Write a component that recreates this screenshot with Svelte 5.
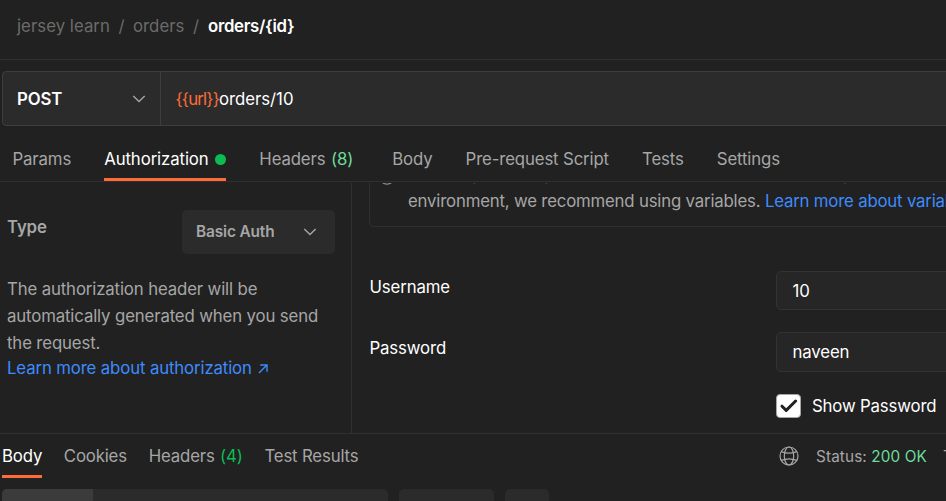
<script>
  const requestTabs = [
    { label: 'Params' },
    { label: 'Authorization', active: true, dot: true },
    { label: 'Headers', count: 8 },
    { label: 'Body' },
    { label: 'Pre-request Script' },
    { label: 'Tests' },
    { label: 'Settings' }
  ];
  const responseTabs = [
    { label: 'Body', active: true },
    { label: 'Cookies' },
    { label: 'Headers', count: 4 },
    { label: 'Test Results' }
  ];
</script>

{#snippet chevron()}
  <svg class="chevron" width="14" height="8" viewBox="0 0 14 8"><path d="M1.3 1.1 7 6.6l5.7-5.5" /></svg>
{/snippet}

<main>
  <nav class="crumbs">
    <span>jersey learn</span><i>/</i><span>orders</span><i>/</i><b>orders/{'{id}'}</b>
  </nav>

  <div class="urlbar">
    <div class="method"><b>POST</b>{@render chevron()}</div>
    <div class="url"><span class="var">{'{{url}}'}</span><span>orders/10</span></div>
  </div>

  <nav class="tabs">
    {#each requestTabs as t}
      <div class="tab" class:active={t.active} class:counted={t.count}>
        {t.label}{#if t.dot}<span class="dot"></span>{/if}{#if t.count}<span class="count">({t.count})</span>{/if}
      </div>
    {/each}
  </nav>

  <section class="auth">
    <aside>
      <div class="type">
        <b>Type</b>
        <div class="select"><b>Basic Auth</b>{@render chevron()}</div>
      </div>
      <p>The authorization header will be<br />automatically generated when you send<br />the request.</p>
      <a class="learn">Learn more about authorization
        <svg width="10" height="10" viewBox="0 0 10 10"><path d="M1 9 8.7 1.3M2.2 1h6.8v6.8" /></svg></a>
    </aside>
    <div class="fields">
      <div class="notice">
        <svg class="info" width="18" height="18" viewBox="0 0 18 18"><circle cx="9" cy="9" r="8.2" /><path d="M9 8v5M9 5v1.2" /></svg>
        <div>Heads up! These parameters hold sensitive data. To keep this data secure while working in a collaborative<br />environment, we recommend using variables. <a>Learn more about variables</a></div>
      </div>
      <div class="row"><span>Username</span><div class="input">10</div></div>
      <div class="row second"><span>Password</span><div class="input">naveen</div></div>
      <div class="show">
        <span class="check"><svg width="18" height="14" viewBox="0 0 18 14"><path d="m2 7.2 4.2 4.2L15.6 2" /></svg></span>
        <span>Show Password</span>
      </div>
    </div>
  </section>

  <section class="response">
    <div class="resbar">
      <nav class="restabs">
        {#each responseTabs as t}
          <div class="tab" class:active={t.active}>
            {t.label}{#if t.count}<span class="count">({t.count})</span>{/if}
          </div>
        {/each}
      </nav>
      <div class="status">
        <svg class="globe" width="20" height="20" viewBox="0 0 20 20">
          <circle cx="10" cy="10" r="9" /><ellipse cx="10" cy="10" rx="4.7" ry="9" />
          <path d="M2.2 5.6Q10 8.8 17.8 5.6M2.2 14.4Q10 11.2 17.8 14.4" />
        </svg>
        <span class="stat">Status: <em>200 OK</em></span><span class="time">Time:</span>
      </div>
    </div>
    <div class="views"><div class="group"><div class="sel"></div></div><div class="drop"></div><div class="wrap"></div></div>
  </section>
</main>

<style>
  :global(body) { margin: 0; background: #212121; }
  main {
    width: 946px; height: 501px; overflow: hidden; background: #212121;
    display: flex; flex-direction: column; color: #a6a6a6;
    font: 16.8px/26px Inter, "Liberation Sans", sans-serif; letter-spacing: -0.14px;
  }
  main, main * { box-sizing: border-box; }
  main { white-space: nowrap; }
  b { font-weight: 600; }
  i, em { font-style: normal; }
  svg { fill: none; stroke: currentColor; flex: none; }
  .crumbs {
    height: 60px; flex: none; border-bottom: 1px solid #303030; padding: 13px 0 0 17px;
    display: flex; color: #6b6b6b; letter-spacing: 0.03px;
  }
  .crumbs i { width: 23px; text-align: center; }
  .crumbs b { color: #fff; letter-spacing: -0.28px; margin-left: 0.5px; }
  .urlbar {
    margin: 11px -8px 0 2px; height: 55px; flex: none; display: flex; background: #2b2b2b;
    border: 1px solid #3d3d3d; border-radius: 4px; color: #fff;
  }
  .method {
    width: 158px; flex: none; border-right: 1px solid #3d3d3d; padding: 0 14px 0 14px;
    display: flex; align-items: center; justify-content: space-between;
  }
  .chevron { color: #a6a6a6; stroke-width: 1.4; }
  .url { padding-left: 14.5px; display: flex; align-items: center; letter-spacing: -0.04px; }
  .var { color: #ff6c37; letter-spacing: -0.8px; width: 43.5px; }
  .tabs { height: 56px; flex: none; border-bottom: 1px solid #303030; display: flex; padding-left: 12.5px; gap: 33.1px; }
  .tabs .tab { height: 55px; padding-top: 20px; display: flex; }
  .tabs .counted { margin-right: 6px; }
  .tab.active { color: #fff; border-bottom: 3px solid #ff6c37; }
  .tabs .tab.active { width: 122px; letter-spacing: -0.11px; }
  .dot { width: 11px; height: 11px; border-radius: 50%; background: #0cbb52; margin: 8px 0 0 auto; }
  .count { color: #6bdd9a; margin-left: 5.5px; }
  .auth { height: 251px; flex: none; display: flex; padding-top: 1px; overflow: hidden; }
  aside { width: 352px; flex: none; border-right: 1px solid #303030; padding: 27px 16px 0 7px; }
  .type { display: flex; justify-content: space-between; height: 44px; }
  .type > b { padding-top: 4px; }
  .select {
    width: 153px; height: 44px; background: #2b2b2b; border-radius: 5px; padding: 0 18px 0 14px;
    display: flex; align-items: center; justify-content: space-between; font-size: 15.4px;
  }
  aside p { margin: 22px 0 0; line-height: 27px; }
  a { color: #3d8bfd; }
  .learn { display: block; line-height: 25px; margin-top: -1px; }
  .learn svg { margin-left: 2px; stroke-width: 1.4; }
  .fields { flex: 1; min-width: 0; padding-left: 17px; overflow: hidden; }
  .notice {
    height: 72px; width: 700px; margin-top: -28px; border: 1px solid #303030; border-radius: 5px;
    padding: 5px 0 0 8px; display: flex; gap: 12px; line-height: 27px; letter-spacing: -0.19px;
  }
  .info { margin-top: 6px; }
  .row { display: flex; justify-content: space-between; margin-top: 44px; height: 39px; color: #fff; }
  .second { margin-top: 22px; height: 40px; }
  .row > span { padding: 3px 0 0 0.5px; }
  .input {
    width: 180px; margin-right: -10px; border: 1px solid #333; border-radius: 5px; background: #262626;
    padding-left: 15.5px; display: flex; align-items: center;
  }
  .show { display: flex; align-items: center; margin: 21px 0 0 407px; gap: 11px; color: #fff; letter-spacing: -0.17px; }
  .check {
    width: 25px; height: 24px; background: #fff; border: 1px solid #a6a6a6; border-radius: 4px;
    display: flex; align-items: center; justify-content: center; color: #212121;
  }
  .check svg { stroke-width: 3; stroke-linecap: round; stroke-linejoin: round; }
  .response { flex: 1; border-top: 1px solid #303030; }
  .resbar { height: 55px; display: flex; justify-content: space-between; }
  .restabs { display: flex; gap: 21.8px; padding-left: 2px; letter-spacing: -0.17px; }
  .restabs .tab { height: 44px; padding-top: 9px; display: flex; }
  .restabs .tab.active { width: 40px; }
  .restabs .count { color: #0cbb52; }
  .status { width: 167px; display: flex; height: 44px; align-items: center; font-size: 15.3px; letter-spacing: 0; }
  .globe { stroke-width: 1.2; }
  .stat { margin-left: 17px; padding-top: 1px; width: 111px; letter-spacing: 0.12px; }
  .stat em { color: #6bdd9a; letter-spacing: 0.12px; }
  .time { margin-left: 16px; padding-top: 1px; }
  .views { display: flex; gap: 11px; padding-left: 2px; height: 30px; }
  .views > div { background: #2b2b2b; border-radius: 5px; overflow: hidden; }
  .views .group { width: 386px; }
  .views .drop { width: 95px; }
  .views .wrap { width: 44px; }
  .sel { width: 91px; height: 100%; background: #3b3b3b; }
</style>
